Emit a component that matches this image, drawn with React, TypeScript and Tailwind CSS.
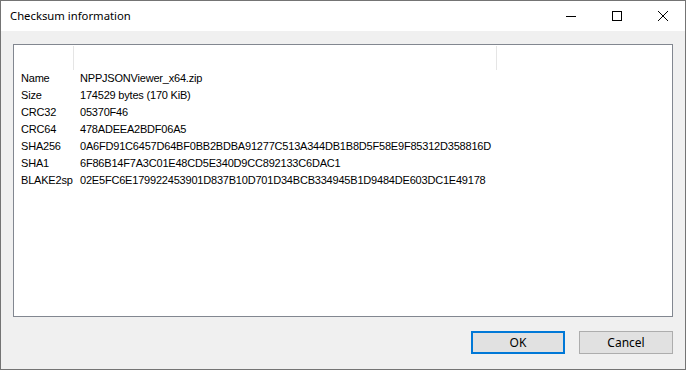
import React from "react";

const rows: [string, string][] = [
  ["Name", "NPPJSONViewer_x64.zip"],
  ["Size", "174529 bytes (170 KiB)"],
  ["CRC32", "05370F46"],
  ["CRC64", "478ADEEA2BDF06A5"],
  ["SHA256", "0A6FD91C6457D64BF0BB2BDBA91277C513A344DB1B8D5F58E9F85312D358816D"],
  ["SHA1", "6F86B14F7A3C01E48CD5E340D9CC892133C6DAC1"],
  ["BLAKE2sp", "02E5FC6E179922453901D837B10D701D34BCB334945B1D9484DE603DC1E49178"],
];

export default function App() {
  return (
    <div className="w-[686px] h-[370px] border border-[#747474] flex flex-col bg-[#f0f0f0] overflow-hidden">
      <div className="h-[30px] bg-white flex items-center shrink-0">
        <div className="pl-[9px] flex-1 text-[11.3px] text-black" style={{ fontFamily: '"Noto Sans", "Segoe UI", sans-serif' }}>
          Checksum information
        </div>
        <div className="flex h-full">
          <div className="w-[46px] h-full flex items-center justify-center">
            <svg width="10" height="10" viewBox="0 0 10 10">
              <rect x="0" y="5" width="10" height="1" fill="#000" />
            </svg>
          </div>
          <div className="w-[46px] h-full flex items-center justify-center">
            <svg width="10" height="10" viewBox="0 0 10 10">
              <rect x="0.5" y="0.5" width="9" height="9" fill="none" stroke="#000" strokeWidth="1" />
            </svg>
          </div>
          <div className="w-[45px] h-full flex items-center justify-center">
            <svg width="10" height="10" viewBox="0 0 10 10">
              <path d="M0 0 L10 10 M10 0 L0 10" stroke="#000" strokeWidth="1" />
            </svg>
          </div>
        </div>
      </div>
      <div className="flex-1 flex flex-col px-[12px] pt-[13px]">
        <div className="h-[273px] border border-[#828790] bg-white flex flex-col">
          <div className="h-[25px] flex shrink-0">
            <div className="w-[59px]" />
            <div className="w-px h-[24px] mt-[1px] bg-[#e5e5e5]" />
            <div className="w-[422px]" />
            <div className="w-px h-[24px] mt-[1px] bg-[#e5e5e5]" />
          </div>
          <div className="flex flex-col" style={{ fontFamily: '"Liberation Sans", Arial, sans-serif' }}>
            {rows.map(([k, v]) => (
              <div key={k} className="h-[17px] flex items-center text-[11px] tracking-[-0.2px] text-black">
                <div className="w-[66px] pl-[7px] shrink-0">{k}</div>
                <div className="whitespace-nowrap">{v}</div>
              </div>
            ))}
          </div>
        </div>
        <div className="flex justify-end gap-[14px] mt-[14px]" style={{ fontFamily: '"Noto Sans", "Segoe UI", sans-serif' }}>
          <button className="w-[94px] h-[23px] border-2 border-[#0078d7] bg-[#e1e1e1] text-[12px] text-black flex items-center justify-center">
            OK
          </button>
          <button className="w-[94px] h-[23px] border border-[#adadad] bg-[#e1e1e1] text-[12px] text-black flex items-center justify-center">
            Cancel
          </button>
        </div>
      </div>
    </div>
  );
}
